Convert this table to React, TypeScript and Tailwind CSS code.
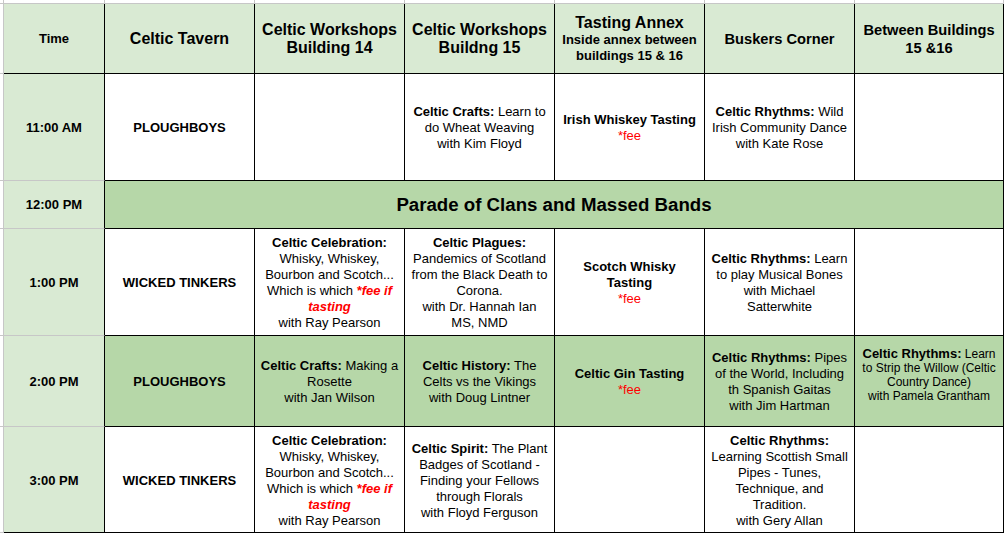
import type { ReactNode } from 'react';

const GRID_LINE = 'border-[#c7c7c7]';

// one line of text inside a cell
type Line = ReactNode;

function Lines({ lines }: { lines: Line[] }) {
  return (
    <>
      {lines.map((line, i) => (
        <div key={i} className="whitespace-nowrap">
          {line}
        </div>
      ))}
    </>
  );
}

const B = ({ children }: { children: ReactNode }) => <span className="font-bold">{children}</span>;
const Fee = () => <span className="text-[#ff0000]">*fee</span>;
const FeeItalic = ({ children }: { children: ReactNode }) => (
  <span className="font-bold italic text-[#ff0000]">{children}</span>
);

function Cell({
  children,
  green,
  className = '',
}: {
  children?: ReactNode;
  green?: boolean;
  className?: string;
}) {
  return (
    <div
      className={`flex flex-col items-center justify-center text-center px-[3px] pt-[2px] border-r border-b border-black text-[13px] leading-[16px] text-black ${
        green ? 'bg-[#b6d7a8]' : 'bg-white'
      } ${className}`}
    >
      {children}
    </div>
  );
}

function HeaderCell({ children, small }: { children: ReactNode; small?: boolean }) {
  return (
    <div
      className={`flex flex-col items-center justify-center text-center px-[3px] border-r border-b border-black bg-[#d9ead3] font-bold text-black ${
        small ? 'text-[14.67px] leading-[18px]' : 'text-[16px] leading-[18px]'
      }`}
    >
      {children}
    </div>
  );
}

function TimeCell({ time, last, flat }: { time: string; last?: boolean; flat?: boolean }) {
  return (
    <div
      className={`flex items-center justify-center border-r border-b border-r-black bg-[#d9ead3] text-[13px] font-bold text-black ${
        last ? 'border-b-black' : 'border-b-[#c7c7c7]'
      } ${flat ? '' : 'pt-[2px]'}`}
    >
      {time}
    </div>
  );
}

// the little strip of sheet gridlines left of the table
const Gutter = () => <div className={`border-r border-b ${GRID_LINE} bg-white`} />;

const celebration: Line[] = [
  <B>Celtic Celebration:</B>,
  'Whisky, Whiskey,',
  'Bourbon and Scotch...',
  <>
    Which is which <FeeItalic>*fee if</FeeItalic>
  </>,
  <FeeItalic>tasting</FeeItalic>,
  'with Ray Pearson',
];

export default function App() {
  return (
    <div
      className="w-[1005px] h-[535px] bg-white overflow-hidden"
      style={{ fontFamily: '"Liberation Sans", Arial, sans-serif' }}
    >
      <div className="grid grid-cols-[4px_101px_150px_150px_150px_150px_150px_149px] grid-rows-[4px_70px_107px_48px_107px_91px_106px]">
        {/* top gridline strip */}
        <div className={`border-r border-b ${GRID_LINE}`} />
        {Array.from({ length: 7 }).map((_, i) => (
          <div key={i} className={`border-r border-b ${GRID_LINE}`} />
        ))}

        {/* header */}
        <Gutter />
        <div className="flex items-center justify-center border-r border-b border-black bg-[#d9ead3] text-[13px] font-bold text-black">
          Time
        </div>
        <HeaderCell>Celtic Tavern</HeaderCell>
        <HeaderCell>
          <Lines lines={['Celtic Workshops', 'Building 14']} />
        </HeaderCell>
        <HeaderCell>
          <Lines lines={['Celtic Workshops', 'Buildng 15']} />
        </HeaderCell>
        <HeaderCell>
          <div>Tasting Annex</div>
          <div className="text-[13px] leading-[16px]">
            <Lines lines={['Inside annex between', 'buildings 15 & 16']} />
          </div>
        </HeaderCell>
        <HeaderCell small>Buskers Corner</HeaderCell>
        <HeaderCell small>
          <Lines lines={['Between Buildings', '15 &16']} />
        </HeaderCell>

        {/* 11:00 */}
        <Gutter />
        <TimeCell time="11:00 AM" />
        <Cell className="font-bold">PLOUGHBOYS</Cell>
        <Cell />
        <Cell>
          <Lines lines={[<><B>Celtic Crafts:</B> Learn to</>, 'do Wheat Weaving', 'with Kim Floyd']} />
        </Cell>
        <Cell>
          <Lines lines={[<B>Irish Whiskey Tasting</B>, <Fee />]} />
        </Cell>
        <Cell>
          <Lines lines={[<><B>Celtic Rhythms:</B> Wild</>, 'Irish Community Dance', 'with Kate Rose']} />
        </Cell>
        <Cell />

        {/* 12:00 */}
        <Gutter />
        <TimeCell time="12:00 PM" flat />
        <div className="col-span-6 flex items-center justify-center border-r border-b border-black bg-[#b6d7a8] text-[18.67px] font-bold text-black">
          Parade of Clans and Massed Bands
        </div>

        {/* 1:00 */}
        <Gutter />
        <TimeCell time="1:00 PM" />
        <Cell className="font-bold">WICKED TINKERS</Cell>
        <Cell>
          <Lines lines={celebration} />
        </Cell>
        <Cell>
          <Lines
            lines={[
              <B>Celtic Plagues:</B>,
              'Pandemics of Scotland',
              'from the Black Death to',
              'Corona.',
              'with Dr. Hannah Ian',
              'MS, NMD',
            ]}
          />
        </Cell>
        <Cell>
          <Lines lines={[<B>Scotch Whisky</B>, <B>Tasting</B>, <Fee />]} />
        </Cell>
        <Cell>
          <Lines
            lines={[<><B>Celtic Rhythms:</B> Learn</>, 'to play Musical Bones', 'with Michael', 'Satterwhite']}
          />
        </Cell>
        <Cell />

        {/* 2:00 */}
        <Gutter />
        <TimeCell time="2:00 PM" />
        <Cell green className="font-bold">
          PLOUGHBOYS
        </Cell>
        <Cell green>
          <Lines lines={[<><B>Celtic Crafts:</B> Making a</>, 'Rosette', 'with Jan Wilson']} />
        </Cell>
        <Cell green>
          <Lines lines={[<><B>Celtic History:</B> The</>, 'Celts vs the Vikings', 'with Doug Lintner']} />
        </Cell>
        <Cell green>
          <Lines lines={[<B>Celtic Gin Tasting</B>, <Fee />]} />
        </Cell>
        <Cell green>
          <Lines
            lines={[
              <><B>Celtic Rhythms:</B> Pipes</>,
              'of the World, Including',
              'th Spanish Gaitas',
              'with Jim Hartman',
            ]}
          />
        </Cell>
        <Cell green>
          {/* this one was typed smaller, with a trailing empty line */}
          <div className="text-[12px] leading-[14px] pb-[14px]">
            <Lines
              lines={[
                <>
                  <span className="text-[13px] font-bold">Celtic Rhythms:</span> Learn
                </>,
                'to Strip the Willow (Celtic',
                'Country Dance)',
                'with Pamela Grantham',
              ]}
            />
          </div>
        </Cell>

        {/* 3:00 */}
        <Gutter />
        <TimeCell time="3:00 PM" last />
        <Cell className="font-bold">WICKED TINKERS</Cell>
        <Cell>
          <Lines lines={celebration} />
        </Cell>
        <Cell>
          <Lines
            lines={[
              <><B>Celtic Spirit:</B> The Plant</>,
              'Badges of Scotland -',
              'Finding your Fellows',
              'through Florals',
              'with Floyd Ferguson',
            ]}
          />
        </Cell>
        <Cell />
        <Cell>
          <Lines
            lines={[
              <B>Celtic Rhythms:</B>,
              'Learning Scottish Small',
              'Pipes - Tunes,',
              'Technique, and',
              'Tradition.',
              'with Gery Allan',
            ]}
          />
        </Cell>
        <Cell />
      </div>
    </div>
  );
}
